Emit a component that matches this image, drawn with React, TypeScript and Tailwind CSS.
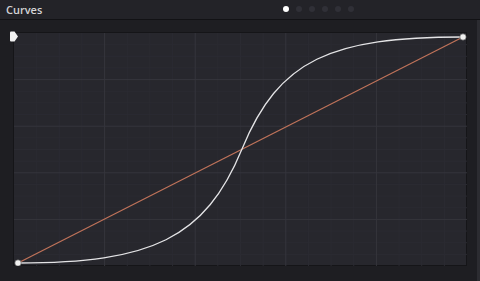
import React from "react";

export default function App() {
  const W = 453;
  const H = 233;
  const majorX = [1, 2, 3, 4].map((i) => (W * i) / 5);
  const majorY = [1, 2, 3, 4].map((i) => (H * i) / 5);
  const minorX: number[] = [];
  const minorY: number[] = [];
  for (let i = 1; i < 20; i++) {
    if (i % 4 !== 0) {
      minorX.push((W * i) / 20);
      minorY.push((H * i) / 20);
    }
  }
  const ox = 13;
  const oy = 33;
  const p = (x: number, y: number) => `${x - ox} ${y - oy}`;
  const curve = `M${p(17, 263)} C${p(150, 263)}, ${p(204, 239)}, ${p(241, 149)} S${p(330, 37)}, ${p(462, 37)}`;
  return (
    <div
      className="w-[480px] h-[281px] bg-[#1e1e22] flex flex-col overflow-hidden"
      style={{ fontFamily: '"Open Sans", "Noto Sans", sans-serif' }}
    >
      <div className="h-[20px] flex items-center px-[6px] bg-[#232328] border-b border-[#121215] relative shrink-0">
        <span className="text-[11px] font-semibold text-[#d4d4d6] leading-none">Curves</span>
        <div className="absolute left-[283px] top-[6px] flex gap-[7px]">
          <span className="w-[6px] h-[6px] rounded-full bg-white" />
          <span className="w-[6px] h-[6px] rounded-full bg-[#303037]" />
          <span className="w-[6px] h-[6px] rounded-full bg-[#303037]" />
          <span className="w-[6px] h-[6px] rounded-full bg-[#303037]" />
          <span className="w-[6px] h-[6px] rounded-full bg-[#303037]" />
          <span className="w-[6px] h-[6px] rounded-full bg-[#303037]" />
        </div>
      </div>
      <div className="flex-1 flex pt-[12px] pl-[13px] pr-[10px] pb-[13px] border-r-[3px] border-[#2c2c31]">
        <div className="relative w-[454px] h-[234px] bg-[#27272d] border border-[#151518]">
          <svg
            className="absolute inset-0"
            width={W}
            height={H}
            viewBox={`0 0 ${W} ${H}`}
          >
            {minorX.map((x, i) => (
              <line key={"mx" + i} x1={x} y1={0} x2={x} y2={H} stroke="#2b2b32" strokeWidth={1} />
            ))}
            {minorY.map((y, i) => (
              <line key={"my" + i} x1={0} y1={y} x2={W} y2={y} stroke="#2b2b32" strokeWidth={1} />
            ))}
            {majorX.map((x, i) => (
              <line key={"Mx" + i} x1={x} y1={0} x2={x} y2={H} stroke="#35353c" strokeWidth={1} />
            ))}
            {majorY.map((y, i) => (
              <line key={"My" + i} x1={0} y1={y} x2={W} y2={y} stroke="#35353c" strokeWidth={1} />
            ))}
            <line x1={4} y1={230} x2={449} y2={4} stroke="#c0735a" strokeWidth={1.2} />
            <path d={curve} fill="none" stroke="#e4e4e6" strokeWidth={1.3} />
            <circle cx={4} cy={230} r={3.2} fill="#f0f0f0" stroke="#444" strokeWidth={0.6} />
            <circle cx={449} cy={4} r={3.2} fill="#f0f0f0" stroke="#444" strokeWidth={0.6} />
          </svg>
          <svg className="absolute left-[-5px] top-[-2px]" width="10" height="11" viewBox="0 0 10 11">
            <path d="M1 1.5 Q1 0.5 2 0.5 L5.5 0.5 L9 5.5 L5.5 10.5 L2 10.5 Q1 10.5 1 9.5 Z" fill="#f2f2f2" />
          </svg>
        </div>
      </div>
    </div>
  );
}
